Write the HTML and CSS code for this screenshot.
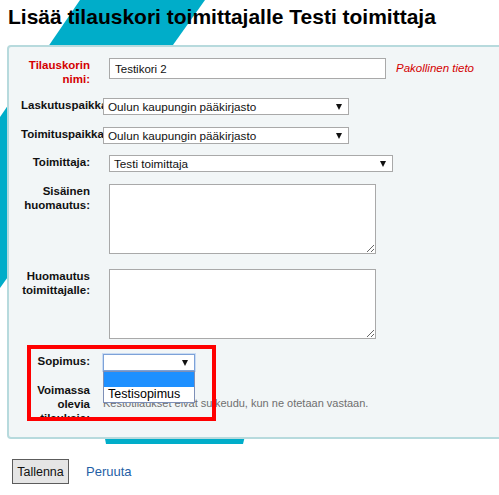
FILE: index.html
```html
<!DOCTYPE html>
<html lang="fi">
<head>
<meta charset="utf-8">
<title>Lisää tilauskori</title>
<link rel="stylesheet" href="styles.css">
</head>
<body>
<svg class="deco" width="499" height="495" viewBox="0 0 499 495" aria-hidden="true">
  <polygon points="80,0 205,0 0,288 0,117" fill="#00adc9"/>
  <polygon points="103,428 247,428 243,444 106,444" fill="#00adc9"/>
</svg>
<h1 class="title">Lisää tilauskori toimittajalle Testi toimittaja</h1>
<div class="frame">
<form class="panel">
  <div class="row r-name">
    <label class="lbl req">Tilauskorin nimi:</label>
    <input class="text-in" type="text" value="Testikori 2">
    <span class="required">Pakollinen tieto</span>
  </div>
  <div class="row">
    <label class="lbl">Laskutuspaikka:</label>
    <div class="sel sel-shift sel-place"><span>Oulun kaupungin pääkirjasto</span></div>
  </div>
  <div class="row">
    <label class="lbl">Toimituspaikka:</label>
    <div class="sel sel-shift sel-place"><span>Oulun kaupungin pääkirjasto</span></div>
  </div>
  <div class="row r-supplier">
    <label class="lbl">Toimittaja:</label>
    <div class="sel sel-supplier"><span>Testi toimittaja</span></div>
  </div>
  <div class="row r-area">
    <label class="lbl">Sisäinen huomautus:</label>
    <textarea class="area"></textarea>
  </div>
  <div class="row r-area">
    <label class="lbl">Huomautus toimittajalle:</label>
    <textarea class="area"></textarea>
  </div>
  <div class="row">
    <label class="lbl">Sopimus:</label>
    <div class="sel sel-shift sel-contract focus">
      <span></span>
      <ul class="dropdown">
        <li class="opt active">&nbsp;</li>
        <li class="opt">Testisopimus</li>
      </ul>
    </div>
  </div>
  <div class="row r-open">
    <label class="lbl">Voimassa olevia tilauksia:</label>
    <p class="note">Kestotilaukset eivät sulkeudu, kun ne otetaan vastaan.</p>
  </div>
  <div class="mark"></div>
</form>
</div>
<div class="actions">
  <button class="btn" type="button">Tallenna</button>
  <a class="link" href="#">Peruuta</a>
</div>
</body>
</html>
```
FILE: styles.css
```css
html, body {
  margin: 0;
  padding: 0;
  background: #fff;
  overflow: hidden;
}
body {
  position: relative;
  width: 499px;
  height: 495px;
  font-family: "Liberation Sans", Arial, sans-serif;
  color: #111;
}
.deco {
  position: absolute;
  left: 0;
  top: 0;
  z-index: 0;
}
.title {
  position: relative;
  z-index: 1;
  margin: 0 0 15px 8px;
  padding-top: 4px;
  font-size: 21px;
  line-height: 26px;
  font-weight: bold;
  color: #000;
  white-space: nowrap;
}
.frame {
  position: relative;
  z-index: 1;
  overflow: hidden;
}
.panel {
  position: relative;
  margin: 0 -30px 0 7px;
  padding: 11px 0 17px 12px;
  background: #f2f6f7;
  border: 2px solid #b7dadd;
  border-radius: 4px;
  display: flex;
  flex-direction: column;
  gap: 12px;
}
.row {
  display: flex;
  align-items: flex-start;
  gap: 19px;
}
.lbl {
  flex: none;
  width: 69px;
  text-align: right;
  font-weight: bold;
  font-size: 11.5px;
  line-height: 14px;
}
.lbl.req {
  color: #d40000;
}
.text-in {
  box-sizing: border-box;
  width: 277px;
  height: 21px;
  margin: 0;
  padding: 0 5px;
  border: 1px solid #a9a9a9;
  background: #fff;
  font-family: inherit;
  font-size: 11.5px;
  color: #111;
  outline: none;
}
.required {
  margin-left: -9px;
  font-style: italic;
  font-size: 11.5px;
  line-height: 21px;
  color: #d40000;
}
.sel {
  position: relative;
  box-sizing: border-box;
  height: 17px;
  padding: 0 14px 0 4px;
  border: 1px solid #a9a9a9;
  background: #fff;
  font-size: 11.7px;
  line-height: 15px;
  color: #111;
  white-space: nowrap;
}
.sel::after {
  content: "";
  position: absolute;
  right: 6px;
  top: 5px;
  border-left: 3.5px solid transparent;
  border-right: 3.5px solid transparent;
  border-top: 6px solid #111;
}
.sel-shift {
  margin-left: -6px;
}
.sel-place {
  width: 246px;
}
.r-supplier {
  margin-top: -1px;
}
.sel-supplier {
  width: 284px;
}
.sel-contract {
  width: 92px;
}
.sel.focus {
  border-color: #7da2d8;
  box-shadow: 0 0 0 1px #c9dbf3;
}
.dropdown {
  position: absolute;
  left: -1px;
  top: 16px;
  width: 92px;
  box-sizing: border-box;
  margin: 0;
  padding: 0;
  list-style: none;
  background: #fff;
  border: 1px solid #7d8fb7;
  z-index: 3;
}
.opt {
  height: 15px;
  padding: 0 0 0 4px;
  font-size: 12.5px;
  line-height: 15px;
  color: #000;
}
.opt.active {
  background: #1e90ff;
}
.area {
  display: block;
  box-sizing: border-box;
  width: 267px;
  height: 70px;
  margin: 0 0 3px;
  border: 1px solid #a9a9a9;
  background: #fff;
  resize: both;
  font-family: inherit;
}
.r-open {
  height: 37px;
  overflow: hidden;
}
.note {
  margin: 13px 0 0 -6px;
  font-size: 11px;
  line-height: 14px;
  color: #6f6f6f;
  white-space: nowrap;
}
.mark {
  position: absolute;
  left: 18px;
  top: 298px;
  width: 181px;
  height: 68px;
  border: 4px solid #ff0000;
  z-index: 4;
  pointer-events: none;
}
.actions {
  display: flex;
  align-items: center;
  gap: 17px;
  margin: 20px 0 0 12px;
}
.btn {
  box-sizing: border-box;
  height: 25px;
  width: 57px;
  padding: 0;
  border: 1px solid #5c5c5c;
  background: #e5e5e5;
  font-family: inherit;
  font-size: 12.5px;
  color: #111;
}
.link {
  font-size: 13px;
  color: #1f5fa6;
  text-decoration: none;
}
```
